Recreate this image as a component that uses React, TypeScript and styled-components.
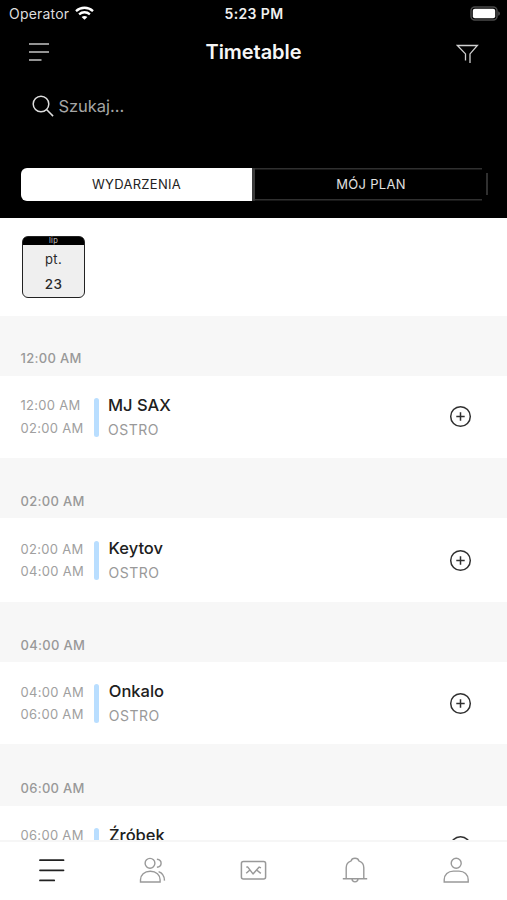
import React from 'react';
import styled, { createGlobalStyle } from 'styled-components';

const GlobalStyle = createGlobalStyle`
  * { box-sizing: border-box; }
  html, body { margin: 0; background: #fff; }
  body { font-family: Inter, "Liberation Sans", sans-serif; overflow: hidden; }
  svg { display: block; flex: none; }
`;

const Screen = styled.main`
  width: 507px;
  height: 900px;
  display: flex;
  flex-direction: column;
  background: #fff;
  overflow: hidden;
`;

const Header = styled.header`
  height: 218px;
  flex: none;
  background: #000;
  color: #fff;
`;

const StatusBar = styled.div`
  height: 28px;
  padding: 0 6px 0 9px;
  display: grid;
  grid-template-columns: 1fr auto 1fr;
  align-items: center;
`;

const Carrier = styled.div`
  display: flex;
  align-items: center;
  gap: 6px;
  font-size: 14px;
  line-height: 28px;
  letter-spacing: 0.2px;
  color: #dedede;

  svg { margin-top: -2px; }
`;

const Clock = styled.div`
  margin-right: 2px;
  font-size: 14px;
  line-height: 28px;
  font-weight: 600;
  letter-spacing: 0.35px;
  color: #f0f0f0;
`;

const Battery = styled.div`
  justify-self: end;
  margin-top: -2px;
`;

const TitleBar = styled.div`
  height: 48px;
  padding: 0 28px;
  display: grid;
  grid-template-columns: 1fr auto 1fr;
  align-items: center;
`;

const Title = styled.h1`
  margin: 0;
  font-size: 20px;
  line-height: 24px;
  font-weight: 600;
  letter-spacing: -0.05px;
  color: #f6f6f6;
`;

const FilterButton = styled.div`
  justify-self: end;
  margin-top: 3px;
`;

const Search = styled.div`
  height: 60px;
  padding-left: 32px;
  display: flex;
  align-items: center;
  gap: 4.5px;
  font-size: 16.5px;
  letter-spacing: -0.05px;
  color: #a6a6a6;
`;

const Segments = styled.div`
  margin: 32px 19px 0 21px;
  height: 32.5px;
  display: flex;
`;

const Segment = styled.div<{ $active?: boolean }>`
  width: ${p => (p.$active ? '231px' : '236px')};
  padding: ${p => (p.$active ? '0 0 1px' : '0 0 1px 2px')};
  display: flex;
  align-items: center;
  justify-content: center;
  font-size: 13px;
  letter-spacing: 0.3px;
  color: ${p => (p.$active ? '#222' : '#e2e2e2')};
  border-radius: ${p => (p.$active ? '6px 0 0 6px' : '0')};
  background: ${p =>
    p.$active
      ? '#fff'
      : `linear-gradient(#3a3a3a, #3a3a3a) left / 3px 100% no-repeat,
         linear-gradient(#303030, #303030) top left / 230px 1.5px no-repeat,
         linear-gradient(#303030, #303030) bottom left / 230px 1.5px no-repeat,
         linear-gradient(#303030, #303030) right / 2px 22px no-repeat,
         #000`};
`;

const DateStrip = styled.section`
  height: 98px;
  flex: none;
  padding: 18px 22px;
`;

const DateCard = styled.div`
  width: 63px;
  height: 62px;
  border: 1.5px solid #222;
  border-radius: 6px;
  background: #efefef;
  text-align: center;
  color: #292929;
`;

const Month = styled.div`
  height: 8px;
  border-radius: 4px 4px 0 0;
  background: #000;
  color: #c4c4c4;
  font-size: 7.5px;
  line-height: 8px;
  letter-spacing: 0.3px;
`;

const Weekday = styled.div`
  font-size: 13px;
  line-height: 26px;
  padding-top: 1px;
  letter-spacing: 0.4px;
`;

const Day = styled.div`
  font-size: 13.5px;
  font-weight: 500;
  line-height: 25px;
  letter-spacing: 0.4px;
`;

const Schedule = styled.section`
  flex: 1;
  min-height: 0;
  overflow: hidden;
`;

const SlotHeading = styled.h2<{ $height: number; $drop: number }>`
  margin: 0;
  height: ${p => p.$height}px;
  padding: ${p => 34 + p.$drop}px 0 0 20.5px;
  background: #f7f7f7;
  color: #999;
  font-size: 13px;
  line-height: 17px;
  font-weight: 500;
  letter-spacing: 0.3px;
`;

const EventRow = styled.article<{ $height: number; $top: number }>`
  height: ${p => p.$height}px;
  padding: ${p => p.$top}px 35px 0 20.5px;
  display: flex;
  align-items: flex-start;
`;

const Times = styled.div`
  width: 73px;
  flex: none;
  color: #a0a0a0;
  font-size: 13px;
  line-height: 22.5px;
  letter-spacing: 0.3px;
  margin-top: -3.5px;
`;

const Stripe = styled.div`
  width: 5px;
  height: 39px;
  border-radius: 2.5px;
  background: #b9deff;
`;

const Details = styled.div<{ $shift: number }>`
  flex: 1;
  padding-left: ${p => 9.5 + p.$shift}px;
  margin-top: -5px;
`;

const Name = styled.div`
  font-size: 16.5px;
  line-height: 25px;
  font-weight: 500;
  color: #202020;
`;

const Stage = styled.div`
  font-size: 14px;
  line-height: 24.5px;
  letter-spacing: 0.5px;
  color: #999;
`;

const AddButton = styled.div`
  margin-top: 7.5px;
`;

const TabBar = styled.nav`
  height: 60px;
  flex: none;
  border-top: 2px solid #f6f6f6;
  display: grid;
  grid-template-columns: repeat(5, 1fr);
  justify-items: center;
  padding-top: 12.5px;
  color: #999;
`;

const slots = [
  { from: '12:00 AM', to: '02:00 AM', name: 'MJ SAX', stage: 'OSTRO', head: 60, drop: 0, row: 82, top: 21.5, shift: 0 },
  { from: '02:00 AM', to: '04:00 AM', name: 'Keytov', stage: 'OSTRO', head: 60, drop: 1, row: 84, top: 23, shift: 0.6 },
  { from: '04:00 AM', to: '06:00 AM', name: 'Onkalo', stage: 'OSTRO', head: 60, drop: 1, row: 82, top: 22, shift: 0.8 },
  { from: '06:00 AM', name: 'Źróbek', head: 62, drop: 2, row: 82, top: 21.5, shift: 1 },
];

const WifiIcon = () => (
  <svg width="19" height="15" viewBox="0 0 19 15" fill="none" stroke="#fff" strokeWidth="2.3">
    <path d="M1 5.1C5.8.6 13.2.6 18 5.1" />
    <path d="M4.1 8.4c3.1-2.9 7.7-2.9 10.8 0" />
    <path d="M6.6 11c1.7-1.5 4.1-1.5 5.8 0L9.5 13.8Z" fill="#fff" stroke="none" />
  </svg>
);

const BatteryIcon = () => (
  <svg width="31" height="15" viewBox="0 0 31 15">
    <rect x="1" y="1" width="26" height="13" rx="3.8" fill="none" stroke="#4a4a4a" strokeWidth="1.5" />
    <rect x="2.8" y="2.8" width="22.4" height="9.4" rx="2" fill="#fff" />
    <path d="M28.4 5.2v4.6c1.8-.9 1.8-3.7 0-4.6Z" fill="#666" />
  </svg>
);

const HeaderMenuIcon = () => (
  <svg width="22" height="20" viewBox="0 0 22 20" stroke="#c4c4c4" strokeWidth="1.4">
    <path d="M1 2h20M1 10h20M1 18h12.5" />
  </svg>
);

const FilterIcon = () => (
  <svg width="23" height="20" viewBox="0 0 23 20" fill="none" stroke="#d0d0d0" strokeWidth="1.3">
    <path d="M9.5 16.5V9.9L1.4 1.5H21.4L14 9.9V19" />
  </svg>
);

const SearchIcon = () => (
  <svg width="22" height="22" viewBox="0 0 22 22" fill="none" stroke="#dedede" strokeWidth="1.5">
    <circle cx="9" cy="9" r="7.8" />
    <path d="m14.5 14.5 6.6 6.6" />
  </svg>
);

const PlusIcon = () => (
  <svg width="23" height="23" viewBox="0 0 23 23" fill="none" stroke="#303030" strokeWidth="1.5">
    <circle cx="11.5" cy="11.5" r="9.8" />
    <path d="M11.5 7.3v8.4M7.3 11.5h8.4" />
  </svg>
);

const AgendaIcon = () => (
  <svg width="28" height="32" viewBox="0 0 28 32" stroke="#222" strokeWidth="1.8" strokeLinecap="round">
    <path d="M3 5.2h23.5M3 15.3h23.5M3 25.4h14.2" />
  </svg>
);

const PeopleIcon = () => (
  <svg width="28" height="32" viewBox="0 0 28 32" fill="none" stroke="currentColor" strokeWidth="1.4">
    <circle cx="12" cy="8.3" r="4.9" />
    <path d="M2.5 27v-2.2c0-5 3.8-8.5 9.8-8.5s9.8 3.5 9.8 8.5V27Z" />
    <path d="M18.9 4.3c2.7.3 4.2 1.8 4.2 4s-1.5 3.8-4.2 4M20.6 16.7c3.4 1.1 5.7 4.3 5.9 8.9" />
  </svg>
);

const PictureIcon = () => (
  <svg width="28" height="32" viewBox="0 0 28 32" fill="none" stroke="currentColor" strokeWidth="1.5" strokeLinejoin="round">
    <rect x="2.4" y="6.4" width="24.2" height="17.6" rx="2" />
    <path d="m7.3 11.9 1.5.2 5.2 6.8 6.2-6.8 1.8.8M7.2 18.2l4-3.4M17.6 15l4.2 3.4" />
  </svg>
);

const BellIcon = () => (
  <svg width="28" height="32" viewBox="0 0 28 32" fill="none" stroke="currentColor" strokeWidth="1.4">
    <path d="M5.2 23.4V12.7c0-3.3 1.9-5.8 5-6.9.3-1.6 1.7-2.5 3.8-2.5s3.5.9 3.8 2.5c3.1 1.1 5 3.6 5 6.9v10.7M1.8 23.7h24.4M10.9 23.8c.2 2 1.4 3.1 3.1 3.1s2.9-1.1 3.1-3.1" />
  </svg>
);

const PersonIcon = () => (
  <svg width="28" height="32" viewBox="0 0 28 32" fill="none" stroke="currentColor" strokeWidth="1.4">
    <circle cx="14.2" cy="8.3" r="5" />
    <path d="M2.2 27v-2.2c0-5.4 3.9-8.7 9.2-8.7H17c5.3 0 9.2 3.3 9.2 8.7V27Z" />
  </svg>
);

export default function App() {
  return (
    <>
      <GlobalStyle />
      <Screen>
        <Header>
          <StatusBar>
            <Carrier>Operator <WifiIcon /></Carrier>
            <Clock>5:23 PM</Clock>
            <Battery><BatteryIcon /></Battery>
          </StatusBar>
          <TitleBar>
            <HeaderMenuIcon />
            <Title>Timetable</Title>
            <FilterButton><FilterIcon /></FilterButton>
          </TitleBar>
          <Search><SearchIcon />Szukaj...</Search>
          <Segments>
            <Segment $active>WYDARZENIA</Segment>
            <Segment>MÓJ PLAN</Segment>
          </Segments>
        </Header>
        <DateStrip>
          <DateCard>
            <Month>lip</Month>
            <Weekday>pt.</Weekday>
            <Day>23</Day>
          </DateCard>
        </DateStrip>
        <Schedule>
          {slots.map(s => (
            <React.Fragment key={s.from}>
              <SlotHeading $height={s.head} $drop={s.drop}>{s.from}</SlotHeading>
              <EventRow $height={s.row} $top={s.top}>
                <Times>
                  <div>{s.from}</div>
                  {s.to && <div>{s.to}</div>}
                </Times>
                <Stripe />
                <Details $shift={s.shift}>
                  <Name>{s.name}</Name>
                  {s.stage && <Stage>{s.stage}</Stage>}
                </Details>
                <AddButton><PlusIcon /></AddButton>
              </EventRow>
            </React.Fragment>
          ))}
        </Schedule>
        <TabBar>
          <AgendaIcon />
          <PeopleIcon />
          <PictureIcon />
          <BellIcon />
          <PersonIcon />
        </TabBar>
      </Screen>
    </>
  );
}
